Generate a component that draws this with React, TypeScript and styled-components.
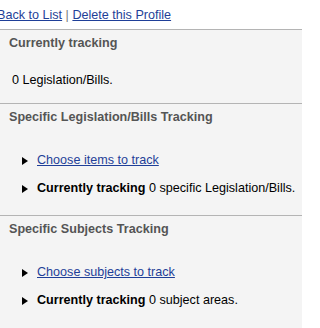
import React from 'react';
import styled, { createGlobalStyle } from 'styled-components';

const GlobalStyle = createGlobalStyle`
  body {
    margin: 0;
    background: #ffffff;
    font-family: 'Liberation Sans', Arial, sans-serif;
    font-size: 12.6px;
    line-height: 16px;
    color: #000000;
  }
`;

type SectionProps = {
  title: string;
  children: React.ReactNode;
};

function Section({ title, children }: SectionProps) {
  return (
    <Panel>
      <Heading>{title}</Heading>
      {children}
    </Panel>
  );
}

export default function App() {
  return (
    <Root>
      <GlobalStyle />
      <TopLinks>
        <Link href="#">Back to List</Link> <Separator>|</Separator>{' '}
        <Link href="#">Delete this Profile</Link>
      </TopLinks>
      <Section title="Currently tracking">
        <Summary>0 Legislation/Bills.</Summary>
      </Section>
      <Section title="Specific Legislation/Bills Tracking">
        <List>
          <Item>
            <Link href="#">Choose items to track</Link>
          </Item>
          <Item>
            <span>
              <strong>Currently tracking</strong> 0 specific Legislation/Bills.
            </span>
          </Item>
        </List>
      </Section>
      <Section title="Specific Subjects Tracking">
        <List>
          <Item>
            <Link href="#">Choose subjects to track</Link>
          </Item>
          <Item>
            <span>
              <strong>Currently tracking</strong> 0 subject areas.
            </span>
          </Item>
        </List>
      </Section>
    </Root>
  );
}

const Root = styled.div`
  width: 302px;
  min-height: 328px;
  background: #f4f4f4;
`;
const TopLinks = styled.div`
  background: #ffffff;
  padding: 7px 0 6px;
  margin-left: -3px;
  white-space: nowrap;
`;
const Link = styled.a`
  color: #1f3f98;
  text-decoration: underline;
`;
const Separator = styled.span`
  color: #7a7a7a;
`;
const Panel = styled.section`
  border-top: 1px solid #b4b4b4;
  background: #f4f4f4;
  padding: 5px 0 15px 9px;

  & + & {
    padding-bottom: 19px;
  }
`;
const Heading = styled.h2`
  margin: 0;
  font-size: 12.6px;
  line-height: 16px;
  font-weight: bold;
  color: #555555;
`;
const Summary = styled.p`
  margin: 21px 0 0 3px;
`;
const List = styled.ul`
  list-style: none;
  margin: 27px 0 0;
  padding: 0 0 0 13px;
  display: flex;
  flex-direction: column;
  gap: 12px;
`;
const Item = styled.li`
  display: flex;
  align-items: center;
  white-space: nowrap;

  &::before {
    content: '';
    flex: none;
    width: 0;
    height: 0;
    margin: 1px 9px 0 0;
    border-top: 4px solid transparent;
    border-bottom: 4px solid transparent;
    border-left: 6px solid #000000;
  }
`;
